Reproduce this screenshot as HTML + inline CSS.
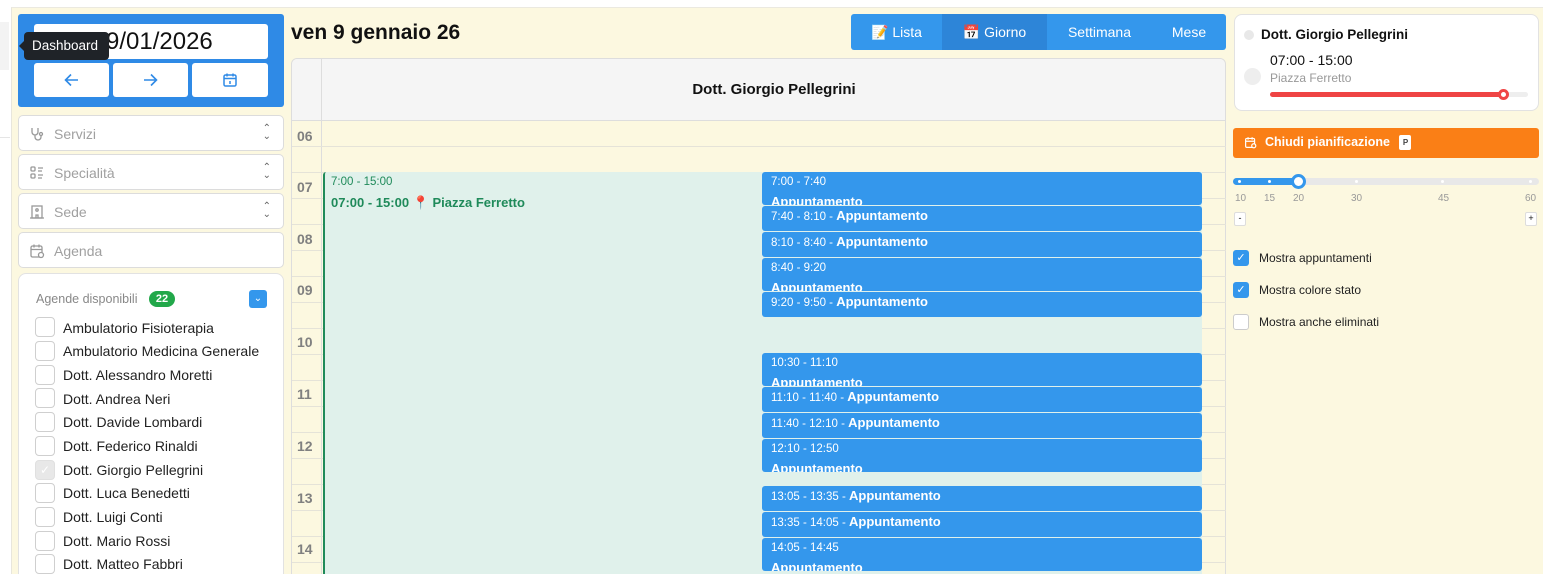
<!DOCTYPE html>
<html><head><meta charset="utf-8"><style>
*{box-sizing:border-box;margin:0;padding:0}
html,body{width:1543px;height:574px;overflow:hidden}
body{background:#fff;font-family:"Liberation Sans",sans-serif;position:relative;color:#111}
.abs{position:absolute}
#main{left:11px;top:7px;width:1532px;height:567px;background:#fcf8e0;border-left:1px solid #e8e6dc;border-top:1px solid #ebe9e0}
.sel{position:absolute;left:18px;width:266px;height:36px;background:#fff;border:1px solid #dcdcdc;border-radius:5px;font-size:14px;color:#a0a0a0}
.sel span{position:absolute;left:35px;top:10px}
.sel svg{position:absolute;left:10px;top:10px}
.sel .ch{position:absolute;right:12px;top:9px;font-size:10px;line-height:8px;color:#666;text-align:center}
.cb{position:absolute;left:35px;width:20px;height:20px;border:1px solid #cfcfcf;border-radius:4px;background:#fff}
.lab{position:absolute;left:63px;font-size:14px;color:#222}
.hl{position:absolute;left:292px;width:934px;height:1px;background:#e5e3d8}
.hr{position:absolute;left:297px;font-size:14px;font-weight:bold;color:#808080}
.ap{position:absolute;left:762px;width:440px;background:#3497ec;border-radius:3px;color:#fff;overflow:hidden;font-size:11.5px;padding:3px 9px;line-height:14px}
.ap b{font-size:13px}
.nav{position:absolute;top:14px;height:36px;color:#fff;font-size:14px;line-height:36px;text-align:center}
</style></head><body>
<div class="abs" style="left:0;top:22px;width:9px;height:48px;background:#f3f3f3"></div>
<div class="abs" style="left:0;top:137px;width:10px;height:1px;background:#e5e5e5"></div>
<div id="main" class="abs"></div>

<div class="abs" style="left:18px;top:14px;width:266px;height:93px;background:#2f8ae6;border-radius:3px"></div>
<div class="abs" style="left:34px;top:24px;width:234px;height:35px;background:#fff;border-radius:3px;font-size:24px;line-height:36px;padding-left:72px;color:#111">9/01/2026</div>
<div class="abs" style="left:34px;top:63px;width:75px;height:34px;background:#fff;border-radius:3px"><svg style="position:absolute;left:30px;top:10px" width="15" height="14" viewBox="0 0 15 14" fill="none" stroke="#2f8ae6" stroke-width="1.6"><path d="M14 7H1.5M7 1.5L1.5 7 7 12.5"/></svg></div>
<div class="abs" style="left:113px;top:63px;width:75px;height:34px;background:#fff;border-radius:3px"><svg style="position:absolute;left:30px;top:10px" width="15" height="14" viewBox="0 0 15 14" fill="none" stroke="#2f8ae6" stroke-width="1.6"><path d="M1 7h12.5M8 1.5L13.5 7 8 12.5"/></svg></div>
<div class="abs" style="left:192px;top:63px;width:76px;height:34px;background:#fff;border-radius:3px"><svg style="position:absolute;left:30px;top:9px" width="16" height="16" viewBox="0 0 16 16" fill="none" stroke="#2f8ae6" stroke-width="1.5"><rect x="2" y="3" width="12" height="11" rx="1.5"/><path d="M2 6.5h12M5 1.5v3M11 1.5v3M8 9v3"/></svg></div>
<div class="abs" style="left:24px;top:32px;width:85px;height:28px;background:#1f2328;border-radius:4px;color:#fff;font-size:13.5px;line-height:28px;padding-left:8px">Dashboard</div>
<div class="abs" style="left:19px;top:41px;width:0;height:0;border:5px solid transparent;border-right-color:#1f2328;border-left:0"></div>

<div class="sel" style="top:115px"><svg width="16" height="16" viewBox="0 0 16 16" fill="none" stroke="#999" stroke-width="1.3"><path d="M3 2v4a3 3 0 006 0V2M6 9v2a3 3 0 006 0V9"/><circle cx="12" cy="8" r="1.5"/></svg><span>Servizi</span><div class="ch">&#8963;<br>&#8964;</div></div>
<div class="sel" style="top:154px"><svg width="16" height="16" viewBox="0 0 16 16" fill="none" stroke="#999" stroke-width="1.3"><rect x="2" y="2" width="4" height="4" rx="1"/><rect x="2" y="9" width="4" height="4" rx="1"/><path d="M9 3h5M9 6h4M9 10h5M9 13h4"/></svg><span>Specialità</span><div class="ch">&#8963;<br>&#8964;</div></div>
<div class="sel" style="top:193px"><svg width="16" height="16" viewBox="0 0 16 16" fill="none" stroke="#999" stroke-width="1.3"><rect x="3" y="2" width="10" height="12"/><path d="M1 14h14M7 14v-3h2v3"/><circle cx="8" cy="6" r="1.2"/></svg><span>Sede</span><div class="ch">&#8963;<br>&#8964;</div></div>
<div class="sel" style="top:232px"><svg width="16" height="16" viewBox="0 0 16 16" fill="none" stroke="#999" stroke-width="1.3"><rect x="2" y="3" width="11" height="11" rx="1.5"/><path d="M2 6.5h11M5 1.5v3M10 1.5v3"/><circle cx="12" cy="12" r="2.5" fill="#fff"/></svg><span>Agenda</span></div>

<div class="abs" style="left:18px;top:273px;width:266px;height:310px;background:#fff;border:1px solid #e2e2e2;border-radius:8px"></div>
<div class="abs" style="left:36px;top:292px;font-size:12.5px;color:#888">Agende disponibili</div>
<div class="abs" style="left:149px;top:291px;width:26px;height:16px;background:#22a84a;border-radius:8px;color:#fff;font-size:11px;font-weight:bold;text-align:center;line-height:16px">22</div>
<div class="abs" style="left:249px;top:290px;width:18px;height:18px;background:#3497ec;border-radius:3px;color:#fff;font-size:10px;text-align:center;line-height:18px">&#8964;</div>

<div class="cb" style="top:317px"></div><div class="lab" style="top:320px">Ambulatorio Fisioterapia</div>
<div class="cb" style="top:341px"></div><div class="lab" style="top:343px">Ambulatorio Medicina Generale</div>
<div class="cb" style="top:365px"></div><div class="lab" style="top:367px">Dott. Alessandro Moretti</div>
<div class="cb" style="top:388px"></div><div class="lab" style="top:391px">Dott. Andrea Neri</div>
<div class="cb" style="top:412px"></div><div class="lab" style="top:414px">Dott. Davide Lombardi</div>
<div class="cb" style="top:436px"></div><div class="lab" style="top:438px">Dott. Federico Rinaldi</div>
<div class="cb" style="top:460px;background:#e8e8e8;border-color:#e0e0e0;color:#fff;font-size:12px;text-align:center;line-height:18px">&#10003;</div><div class="lab" style="top:462px">Dott. Giorgio Pellegrini</div>
<div class="cb" style="top:483px"></div><div class="lab" style="top:485px">Dott. Luca Benedetti</div>
<div class="cb" style="top:507px"></div><div class="lab" style="top:509px">Dott. Luigi Conti</div>
<div class="cb" style="top:531px"></div><div class="lab" style="top:533px">Dott. Mario Rossi</div>
<div class="cb" style="top:554px"></div><div class="lab" style="top:556px">Dott. Matteo Fabbri</div>

<div class="abs" style="left:291px;top:21px;font-size:21px;font-weight:bold">ven 9 gennaio 26</div>
<div class="abs" style="left:851px;top:14px;width:375px;height:36px;background:#3497ec;border-radius:3px"></div>
<div class="nav" style="left:851px;width:91px">📝 Lista</div>
<div class="nav" style="left:942px;width:105px;background:#2d85d8">📅 Giorno</div>
<div class="nav" style="left:1047px;width:105px">Settimana</div>
<div class="nav" style="left:1152px;width:74px">Mese</div>

<div class="abs" style="left:291px;top:58px;width:935px;height:530px;border:1px solid #ddd;border-radius:6px;overflow:hidden">
 <div class="abs" style="left:0;top:0;width:935px;height:62px;background:#f5f5f5;border-bottom:1px solid #ddd"></div>
 <div class="abs" style="left:29px;top:0;width:1px;height:530px;background:#ddd"></div>
 <div class="abs" style="left:30px;top:22px;width:904px;text-align:center;font-size:15px;font-weight:bold">Dott. Giorgio Pellegrini</div>
</div>
<div class="hl" style="top:146px"></div><div class="hl" style="top:172px"></div><div class="hl" style="top:198px"></div><div class="hl" style="top:224px"></div><div class="hl" style="top:250px"></div><div class="hl" style="top:276px"></div><div class="hl" style="top:302px"></div><div class="hl" style="top:328px"></div><div class="hl" style="top:354px"></div><div class="hl" style="top:380px"></div><div class="hl" style="top:406px"></div><div class="hl" style="top:432px"></div><div class="hl" style="top:458px"></div><div class="hl" style="top:484px"></div><div class="hl" style="top:510px"></div><div class="hl" style="top:536px"></div><div class="hl" style="top:562px"></div>
<div class="hr" style="top:128px">06</div><div class="hr" style="top:179px">07</div><div class="hr" style="top:231px">08</div><div class="hr" style="top:282px">09</div><div class="hr" style="top:334px">10</div><div class="hr" style="top:386px">11</div><div class="hr" style="top:438px">12</div><div class="hr" style="top:490px">13</div><div class="hr" style="top:541px">14</div>

<div class="abs" style="left:323px;top:172px;width:879px;height:402px;background:#e0f1eb;border-left:2px solid #1f8a5a;border-radius:3px 0 0 0"></div>
<div class="abs" style="left:331px;top:176px;font-size:11.5px;color:#1f8a5a">7:00 - 15:00</div>
<div class="abs" style="left:331px;top:195px;font-size:13px;font-weight:bold;color:#1f8a5a">07:00 - 15:00 📍 Piazza Ferretto</div>

<div class="ap" style="top:172px;height:33px">7:00 - 7:40<br><b style="line-height:26px">Appuntamento</b></div>
<div class="ap" style="top:206px;height:25px">7:40 - 8:10 - <b>Appuntamento</b></div>
<div class="ap" style="top:232px;height:25px">8:10 - 8:40 - <b>Appuntamento</b></div>
<div class="ap" style="top:258px;height:33px">8:40 - 9:20<br><b style="line-height:26px">Appuntamento</b></div>
<div class="ap" style="top:292px;height:25px">9:20 - 9:50 - <b>Appuntamento</b></div>
<div class="ap" style="top:353px;height:33px">10:30 - 11:10<br><b style="line-height:26px">Appuntamento</b></div>
<div class="ap" style="top:387px;height:25px">11:10 - 11:40 - <b>Appuntamento</b></div>
<div class="ap" style="top:413px;height:25px">11:40 - 12:10 - <b>Appuntamento</b></div>
<div class="ap" style="top:439px;height:33px">12:10 - 12:50<br><b style="line-height:26px">Appuntamento</b></div>
<div class="ap" style="top:486px;height:25px">13:05 - 13:35 - <b>Appuntamento</b></div>
<div class="ap" style="top:512px;height:25px">13:35 - 14:05 - <b>Appuntamento</b></div>
<div class="ap" style="top:538px;height:33px">14:05 - 14:45<br><b style="line-height:26px">Appuntamento</b></div>

<div class="abs" style="left:1234px;top:14px;width:305px;height:97px;background:#fff;border:1px solid #e2e2e2;border-radius:8px"></div>
<div class="abs" style="left:1244px;top:30px;width:10px;height:10px;border-radius:5px;background:#e8e8e8"></div>
<div class="abs" style="left:1261px;top:27px;font-size:13.5px;font-weight:bold">Dott. Giorgio Pellegrini</div>
<div class="abs" style="left:1270px;top:52px;font-size:14px">07:00 - 15:00</div>
<div class="abs" style="left:1244px;top:68px;width:17px;height:17px;border-radius:9px;background:#eee"></div>
<div class="abs" style="left:1270px;top:71px;font-size:12px;color:#999">Piazza Ferretto</div>
<div class="abs" style="left:1270px;top:92px;width:258px;height:5px;border-radius:3px;background:#eee"></div>
<div class="abs" style="left:1270px;top:92px;width:234px;height:5px;border-radius:3px;background:#ef4444"></div>
<div class="abs" style="left:1498px;top:89px;width:11px;height:11px;border-radius:6px;background:#fff;border:3px solid #ef4444"></div>

<div class="abs" style="left:1233px;top:128px;width:306px;height:30px;background:#fa7f16;border-radius:3px;color:#fff;font-size:12.5px;font-weight:bold;line-height:28px;padding-left:32px">Chiudi pianificazione <span style="display:inline-block;background:#fff;color:#444;font-size:8px;width:12px;height:15px;line-height:15px;text-align:center;border-radius:2px;margin-left:6px;vertical-align:1px">P</span></div>
<svg class="abs" style="left:1244px;top:136px" width="13" height="13" viewBox="0 0 16 16" fill="none" stroke="#fff" stroke-width="1.5"><rect x="2" y="3" width="11" height="11" rx="1.5"/><path d="M2 6.5h11M5 1.5v3M10 1.5v3"/><circle cx="12" cy="12" r="2.5" fill="#fa7f16"/></svg>

<div class="abs" style="left:1233px;top:178px;width:306px;height:7px;border-radius:4px;background:#e8e8e8"></div>
<div class="abs" style="left:1233px;top:178px;width:66px;height:7px;border-radius:4px;background:#3497ec"></div>
<div class="abs" style="left:1238px;top:180px;width:3px;height:3px;border-radius:2px;background:#fff"></div>
<div class="abs" style="left:1268px;top:180px;width:3px;height:3px;border-radius:2px;background:#fff"></div>
<div class="abs" style="left:1355px;top:180px;width:3px;height:3px;border-radius:2px;background:#fff"></div>
<div class="abs" style="left:1441px;top:180px;width:3px;height:3px;border-radius:2px;background:#fff"></div>
<div class="abs" style="left:1529px;top:180px;width:3px;height:3px;border-radius:2px;background:#fff"></div>
<div class="abs" style="left:1291px;top:174px;width:15px;height:15px;border-radius:8px;background:#fff;border:3px solid #3497ec"></div>
<div class="abs" style="left:1235px;top:193px;font-size:10px;color:#999">10</div>
<div class="abs" style="left:1264px;top:193px;font-size:10px;color:#999">15</div>
<div class="abs" style="left:1293px;top:193px;font-size:10px;color:#999">20</div>
<div class="abs" style="left:1351px;top:193px;font-size:10px;color:#999">30</div>
<div class="abs" style="left:1438px;top:193px;font-size:10px;color:#999">45</div>
<div class="abs" style="left:1525px;top:193px;font-size:10px;color:#999">60</div>
<div class="abs" style="left:1234px;top:212px;width:12px;height:14px;background:#fff;border:1px solid #ddd;border-radius:2px;font-size:9px;text-align:center;line-height:11px">-</div>
<div class="abs" style="left:1525px;top:212px;width:12px;height:14px;background:#fff;border:1px solid #ddd;border-radius:2px;font-size:9px;text-align:center;line-height:11px">+</div>

<div class="abs" style="left:1233px;top:250px;width:16px;height:16px;border-radius:3px;background:#3497ec;color:#fff;font-size:11px;text-align:center;line-height:16px">&#10003;</div>
<div class="abs" style="left:1259px;top:251px;font-size:12px;color:#222">Mostra appuntamenti</div>
<div class="abs" style="left:1233px;top:282px;width:16px;height:16px;border-radius:3px;background:#3497ec;color:#fff;font-size:11px;text-align:center;line-height:16px">&#10003;</div>
<div class="abs" style="left:1259px;top:283px;font-size:12px;color:#222">Mostra colore stato</div>
<div class="abs" style="left:1233px;top:314px;width:16px;height:16px;border-radius:3px;background:#fff;border:1px solid #ccc"></div>
<div class="abs" style="left:1259px;top:315px;font-size:12px;color:#222">Mostra anche eliminati</div>
</body></html>
